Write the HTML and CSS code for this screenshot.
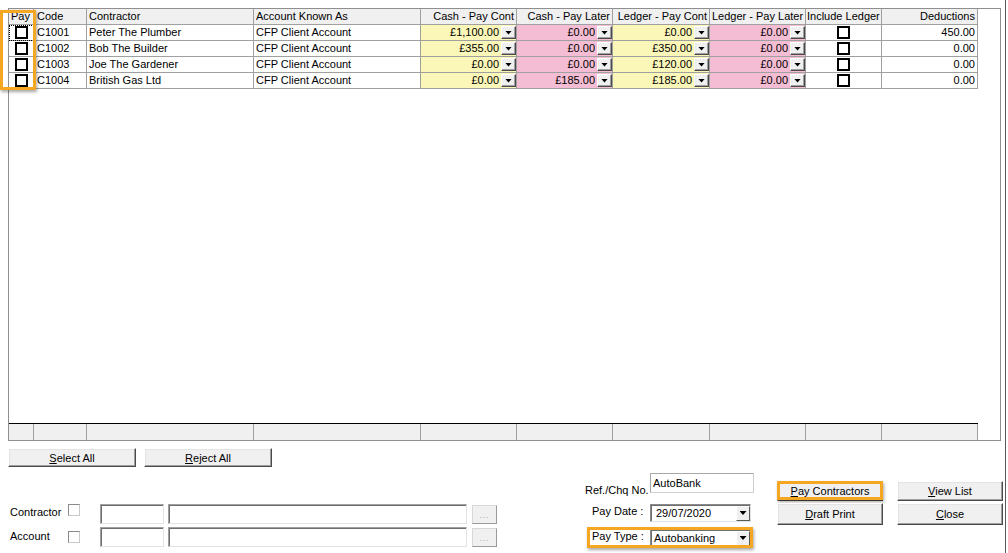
FILE: index.html
```html
<!DOCTYPE html>
<html>
<head>
<meta charset="utf-8">
<link rel="stylesheet" href="styles.css">
</head>
<body>
<div class="page">
  <div class="grid-box">
    <div class="row head">
      <div>Pay</div>
      <div class="code">Code</div>
      <div>Contractor</div>
      <div>Account Known As</div>
      <div class="r">Cash - Pay Cont</div>
      <div class="r">Cash - Pay Later</div>
      <div class="r">Ledger - Pay Cont</div>
      <div class="r">Ledger - Pay Later</div>
      <div class="il">Include Ledger</div>
      <div class="r">Deductions</div>
    </div>
    <div class="row">
      <div class="chk focus"><span class="cb"></span></div>
      <div class="code">C1001</div>
      <div>Peter The Plumber</div>
      <div>CFP Client Account</div>
      <div class="money y"><span>£1,100.00</span><i class="dd"></i></div>
      <div class="money p"><span>£0.00</span><i class="dd"></i></div>
      <div class="money y"><span>£0.00</span><i class="dd"></i></div>
      <div class="money p"><span>£0.00</span><i class="dd"></i></div>
      <div class="chk"><span class="cb"></span></div>
      <div class="r">450.00</div>
    </div>
    <div class="row">
      <div class="chk"><span class="cb"></span></div>
      <div class="code">C1002</div>
      <div>Bob The Builder</div>
      <div>CFP Client Account</div>
      <div class="money y"><span>£355.00</span><i class="dd"></i></div>
      <div class="money p"><span>£0.00</span><i class="dd"></i></div>
      <div class="money y"><span>£350.00</span><i class="dd"></i></div>
      <div class="money p"><span>£0.00</span><i class="dd"></i></div>
      <div class="chk"><span class="cb"></span></div>
      <div class="r">0.00</div>
    </div>
    <div class="row">
      <div class="chk"><span class="cb"></span></div>
      <div class="code">C1003</div>
      <div>Joe The Gardener</div>
      <div>CFP Client Account</div>
      <div class="money y"><span>£0.00</span><i class="dd"></i></div>
      <div class="money p"><span>£0.00</span><i class="dd"></i></div>
      <div class="money y"><span>£120.00</span><i class="dd"></i></div>
      <div class="money p"><span>£0.00</span><i class="dd"></i></div>
      <div class="chk"><span class="cb"></span></div>
      <div class="r">0.00</div>
    </div>
    <div class="row">
      <div class="chk"><span class="cb"></span></div>
      <div class="code">C1004</div>
      <div>British Gas Ltd</div>
      <div>CFP Client Account</div>
      <div class="money y"><span>£0.00</span><i class="dd"></i></div>
      <div class="money p"><span>£185.00</span><i class="dd"></i></div>
      <div class="money y"><span>£185.00</span><i class="dd"></i></div>
      <div class="money p"><span>£0.00</span><i class="dd"></i></div>
      <div class="chk"><span class="cb"></span></div>
      <div class="r">0.00</div>
    </div>
    <div class="row foot">
      <div></div><div></div><div></div><div></div><div></div><div></div><div></div><div></div><div></div><div></div>
    </div>
    <div class="hl hl-pay"></div>
  </div>

  <div class="bottom">
    <div class="left">
      <div class="sel-row">
        <div class="btn sel"><span><u>S</u>elect All</span></div>
        <div class="btn sel"><span><u>R</u>eject All</span></div>
      </div>
      <div class="filters">
        <div class="frow">
          <span class="flabel">Contractor</span>
          <span class="fcb"></span>
          <span class="tb tcode"></span>
          <span class="tb tname"></span>
          <span class="ell">...</span>
        </div>
        <div class="frow second">
          <span class="flabel">Account</span>
          <span class="fcb"></span>
          <span class="tb tcode"></span>
          <span class="tb tname"></span>
          <span class="ell">...</span>
        </div>
      </div>
    </div>

    <div class="mid">
      <div class="mrow ref">
        <span class="mlabel">Ref./Chq No.</span>
        <span class="refbox">AutoBank</span>
      </div>
      <div class="mrow date">
        <span class="mlabel ind">Pay Date :</span>
        <span class="combo"><span class="ctext">29/07/2020</span><i class="cbtn"></i></span>
      </div>
      <div class="mrow type">
        <span class="mlabel ind">Pay Type :</span>
        <span class="combo"><span class="ctext">Autobanking</span><i class="cbtn"></i></span>
        <span class="hl hl-type"></span>
      </div>
    </div>

    <div class="right">
      <div class="btn act"><span><u>P</u>ay Contractors</span><span class="hl hl-btn"></span></div>
      <div class="btn act"><span><u>V</u>iew List</span></div>
      <div class="btn act"><span><u>D</u>raft Print</span></div>
      <div class="btn act"><span><u>C</u>lose</span></div>
    </div>
  </div>
</div>
</body>
</html>
```

FILE: styles.css
```css
* { box-sizing: border-box; }
html, body { margin: 0; padding: 0; background: #fff; }
body {
  font-family: "Liberation Sans", Arial, sans-serif;
  font-size: 11px;
  color: #000;
}
.page {
  width: 1006px;
  height: 553px;
  padding: 8px 0 0 8px;
  border-right: 1px solid #5a5a5a;
  overflow: hidden;
}

/* grid */
.grid-box {
  position: relative;
  width: 993px;
  height: 433px;
  border: 1px solid #8f8f8f;
  display: flex;
  flex-direction: column;
}
.row {
  display: grid;
  grid-template-columns: 25px 53px 167px 167px 96px 96px 97px 96px 76px 96px;
  width: 969px;
  height: 16px;
}
.row > div {
  height: 16px;
  border-right: 1px solid #a0a0a0;
  border-bottom: 1px solid #a0a0a0;
  line-height: 15px;
  padding: 0 2px;
  white-space: nowrap;
  overflow: hidden;
}
.row.head > div { background: #f0f0f0; }
.row > div.code { padding-left: 3px; }
.row > div.r { text-align: right; }
.row.head > div.r { padding-right: 2px; }
.row.head > div.il { padding-left: 1px; }
.row > .chk {
  display: flex;
  align-items: center;
  justify-content: center;
  padding: 0;
}
.row > .focus {
  outline: 1px dotted #000;
  outline-offset: -1px;
}
.cb {
  width: 13px;
  height: 13px;
  border: 2px solid #000;
  background: #fff;
}
.row > .money {
  display: flex;
  align-items: center;
  justify-content: flex-end;
  padding: 0;
}
.money span { padding-right: 2px; }
.money.y { background: #fbf7b9; }
.money.p { background: #f4bdd3; }
.dd {
  width: 15px;
  height: 13px;
  background: #f0f0f0;
  border: 1px solid;
  border-color: #fff #4a4a4a #4a4a4a #fff;
  box-shadow: inset -1px -1px 0 #a0a0a0;
  display: flex;
  align-items: center;
  justify-content: center;
}
.dd::after, .cbtn::after {
  content: "";
  width: 7px;
  height: 4px;
  background: #000;
  clip-path: polygon(0 0, 100% 0, 50% 100%);
}
.row.foot {
  margin-top: auto;
  height: 17px;
  border-top: 1px solid #000;
}
.row.foot > div {
  background: #f0f0f0;
  border-bottom: none;
}

/* highlights */
.hl {
  position: absolute;
  border: 3px solid #f5a623;
  box-shadow: 1px 2px 3px rgba(0, 0, 0, 0.35);
  pointer-events: none;
}
.hl-pay {
  left: -9px;
  top: 1px;
  width: 36px;
  height: 80px;
}

/* bottom area */
.bottom {
  display: flex;
  margin-top: 7px;
}
.left { width: 490px; }
.sel-row { display: flex; gap: 8px; }
.btn {
  position: relative;
  display: flex;
  align-items: center;
  justify-content: center;
  background: #f0f0f0;
  border: 1px solid;
  border-color: #fff #4a4a4a #4a4a4a #fff;
  box-shadow: inset -1px -1px 0 #a0a0a0, inset 1px 1px 0 #e3e3e3;
  white-space: nowrap;
}
.sel { width: 128px; height: 19px; }
.filters { margin-top: 37px; }
.frow {
  display: flex;
  height: 20px;
}
.frow.second { margin-top: 3px; }
.flabel {
  width: 60px;
  padding-left: 2px;
  line-height: 13px;
  margin-top: 2px;
}
.frow.second .flabel { margin-top: 3px; }
.fcb {
  width: 12px;
  height: 12px;
  border: 1px solid;
  border-color: #8a8a8a #c8c8c8 #c8c8c8 #8a8a8a;
  background: #fff;
}
.frow.second .fcb { margin-top: 4px; }
.tb {
  height: 20px;
  background: #fff;
  border: 1px solid;
  border-color: #a0a0a0 #e3e3e3 #e3e3e3 #a0a0a0;
  box-shadow: inset 1px 1px 0 #6e6e6e;
}
.tcode { width: 64px; margin-left: 20px; }
.tname { width: 299px; margin-left: 4px; }
.ell {
  width: 25px;
  height: 19px;
  margin-left: 5px;
  margin-top: 1px;
  background: #f0f0f0;
  border: 1px solid;
  border-color: #d8d8d8 #9a9a9a #9a9a9a #d8d8d8;
  color: #909090;
  font-size: 8px;
  text-align: center;
  line-height: 20px;
  letter-spacing: 1px;
}

.mid {
  width: 169px;
  margin-left: 87px;
  padding-top: 25px;
}
.mrow {
  position: relative;
  display: flex;
}
.mlabel { width: 65px; white-space: nowrap; }
.mlabel.ind {
  padding-left: 7px;
  align-self: flex-start;
  line-height: 13px;
  margin-top: 1px;
}
.mrow.ref { align-items: flex-end; height: 20px; }
.mrow.ref .mlabel { margin-bottom: -3px; }
.refbox {
  width: 104px;
  height: 20px;
  border: 1px solid;
  border-color: #a8a8a8 #cfcfcf #cfcfcf #a8a8a8;
  padding: 2px 0 0 2px;
  line-height: 14px;
}
.mrow.date { margin-top: 11px; height: 18px; }
.mrow.type { margin-top: 7px; height: 18px; }
.combo {
  width: 101px;
  height: 18px;
  display: flex;
  align-items: center;
  border: 1px solid;
  border-color: #8a8a8a #e3e3e3 #e3e3e3 #8a8a8a;
  box-shadow: inset 1px 1px 0 #6e6e6e;
  background: #fff;
}
.date .ctext { padding-left: 5px; flex: 1; }
.type .ctext { padding-left: 3px; flex: 1; }
.cbtn {
  width: 14px;
  height: 15px;
  background: #f0f0f0;
  border: 1px solid;
  border-color: #fff #5a5a5a #5a5a5a #fff;
  display: flex;
  align-items: center;
  justify-content: center;
}
.hl-type {
  left: 2px;
  top: -2px;
  width: 166px;
  height: 21px;
}

.right {
  margin-left: 23px;
  padding-top: 33px;
  display: grid;
  grid-template-columns: 106px 106px;
  grid-template-rows: 20px 22px;
  column-gap: 14px;
  row-gap: 2px;
  align-self: flex-start;
}
.hl-btn {
  left: -1px;
  top: -1px;
  right: -1px;
  bottom: 0;
}
```
